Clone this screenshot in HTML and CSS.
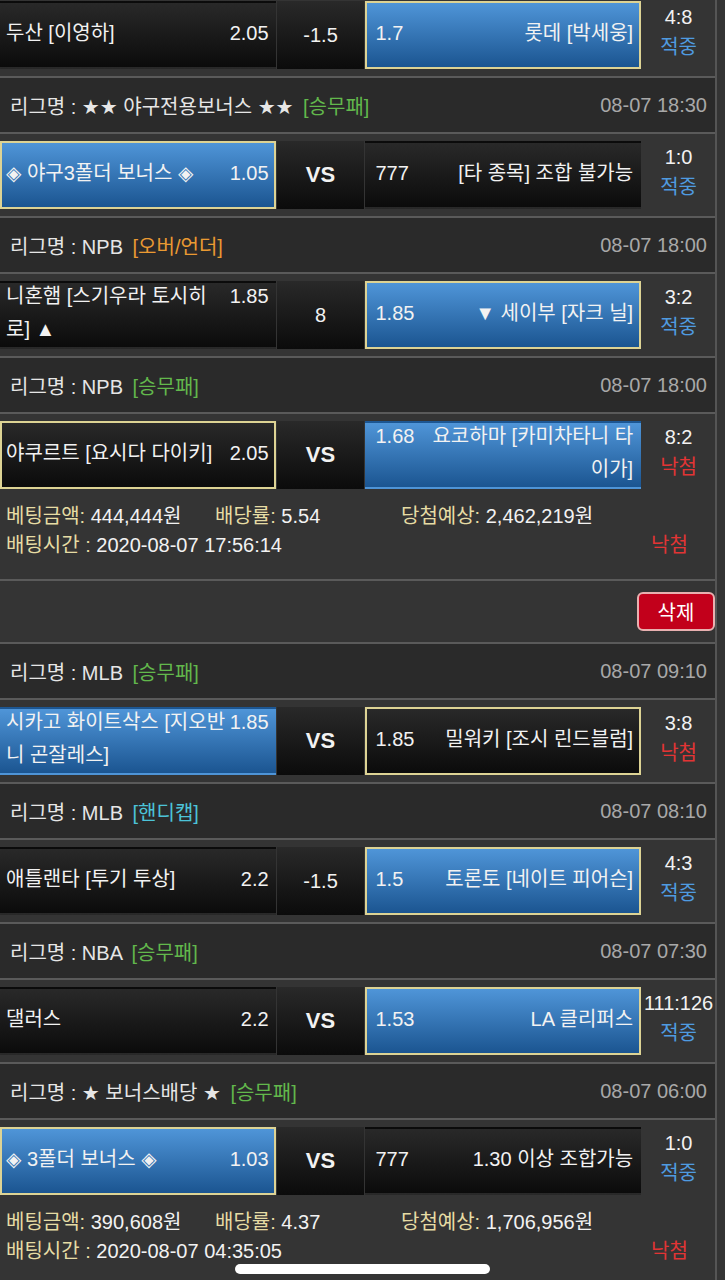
FILE: index.html
```html
<!DOCTYPE html>
<html lang="ko">
<head>
  <meta charset="UTF-8">
  <meta name="viewport" content="width=device-width, initial-scale=1.0">
  <title>배팅내역</title>
  <link rel="stylesheet" href="styles.css">
</head>
<body>
  <div class="bet-list">

    <div class="match first">
      <div class="team home"><div class="team-in"><span class="odds">2.05</span>두산 [이영하]</div></div>
      <div class="mid">-1.5</div>
      <div class="team away win picked"><div class="team-in"><span class="odds">1.7</span>롯데 [박세웅]</div></div>
      <div class="result"><div>4:8</div><div class="hit">적중</div></div>
    </div>

    <div class="league">
      <div>리그명 : ★★ 야구전용보너스 ★★ <span class="type green">[승무패]</span></div>
      <div class="time">08-07 18:30</div>
    </div>
    <div class="match">
      <div class="team home win picked"><div class="team-in"><span class="odds">1.05</span>◈ 야구3폴더 보너스 ◈</div></div>
      <div class="mid vs">VS</div>
      <div class="team away"><div class="team-in"><span class="odds">777</span>[타 종목] 조합 불가능</div></div>
      <div class="result"><div>1:0</div><div class="hit">적중</div></div>
    </div>

    <div class="league">
      <div>리그명 : NPB <span class="type orange">[오버/언더]</span></div>
      <div class="time">08-07 18:00</div>
    </div>
    <div class="match">
      <div class="team home"><div class="team-in"><span class="odds">1.85</span>니혼햄 [스기우라 토시히로] ▲</div></div>
      <div class="mid">8</div>
      <div class="team away win picked"><div class="team-in"><span class="odds">1.85</span>▼ 세이부 [자크 닐]</div></div>
      <div class="result"><div>3:2</div><div class="hit">적중</div></div>
    </div>

    <div class="league">
      <div>리그명 : NPB <span class="type green">[승무패]</span></div>
      <div class="time">08-07 18:00</div>
    </div>
    <div class="match">
      <div class="team home picked"><div class="team-in"><span class="odds">2.05</span>야쿠르트 [요시다 다이키]</div></div>
      <div class="mid vs">VS</div>
      <div class="team away win"><div class="team-in"><span class="odds">1.68</span>요코하마 [카미차타니 타이가]</div></div>
      <div class="result"><div>8:2</div><div class="miss">낙첨</div></div>
    </div>

    <div class="bet-info">
      <div class="info-row">
        <div><span class="label">베팅금액:</span> 444,444원</div>
        <div><span class="label">배당률:</span> 5.54</div>
        <div><span class="label">당첨예상:</span> 2,462,219원</div>
      </div>
      <div class="info-row last">
        <div><span class="label">배팅시간 :</span> 2020-08-07 17:56:14</div>
        <div class="miss">낙첨</div>
      </div>
    </div>
    <div class="actions">
      <button class="delete-btn">삭제</button>
    </div>

    <div class="league">
      <div>리그명 : MLB <span class="type green">[승무패]</span></div>
      <div class="time">08-07 09:10</div>
    </div>
    <div class="match">
      <div class="team home win"><div class="team-in"><span class="odds">1.85</span>시카고 화이트삭스 [지오반니 곤잘레스]</div></div>
      <div class="mid vs">VS</div>
      <div class="team away picked"><div class="team-in"><span class="odds">1.85</span>밀워키 [조시 린드블럼]</div></div>
      <div class="result"><div>3:8</div><div class="miss">낙첨</div></div>
    </div>

    <div class="league">
      <div>리그명 : MLB <span class="type cyan">[핸디캡]</span></div>
      <div class="time">08-07 08:10</div>
    </div>
    <div class="match">
      <div class="team home"><div class="team-in"><span class="odds">2.2</span>애틀랜타 [투기 투상]</div></div>
      <div class="mid">-1.5</div>
      <div class="team away win picked"><div class="team-in"><span class="odds">1.5</span>토론토 [네이트 피어슨]</div></div>
      <div class="result"><div>4:3</div><div class="hit">적중</div></div>
    </div>

    <div class="league">
      <div>리그명 : NBA <span class="type green">[승무패]</span></div>
      <div class="time">08-07 07:30</div>
    </div>
    <div class="match">
      <div class="team home"><div class="team-in"><span class="odds">2.2</span>댈러스</div></div>
      <div class="mid vs">VS</div>
      <div class="team away win picked"><div class="team-in"><span class="odds">1.53</span>LA 클리퍼스</div></div>
      <div class="result"><div>111:126</div><div class="hit">적중</div></div>
    </div>

    <div class="league">
      <div>리그명 : ★ 보너스배당 ★ <span class="type green">[승무패]</span></div>
      <div class="time">08-07 06:00</div>
    </div>
    <div class="match">
      <div class="team home win picked"><div class="team-in"><span class="odds">1.03</span>◈ 3폴더 보너스 ◈</div></div>
      <div class="mid vs">VS</div>
      <div class="team away"><div class="team-in"><span class="odds">777</span>1.30 이상 조합가능</div></div>
      <div class="result"><div>1:0</div><div class="hit">적중</div></div>
    </div>

    <div class="bet-info">
      <div class="info-row">
        <div><span class="label">베팅금액:</span> 390,608원</div>
        <div><span class="label">배당률:</span> 4.37</div>
        <div><span class="label">당첨예상:</span> 1,706,956원</div>
      </div>
      <div class="info-row last">
        <div><span class="label">배팅시간 :</span> 2020-08-07 04:35:05</div>
        <div class="miss">낙첨</div>
      </div>
    </div>

  </div>
  <div class="home-bar"></div>
</body>
</html>
```

FILE: styles.css
```css
body {
  margin: 0;
  background: #343434;
  color: #f2f2f2;
  font-family: "Liberation Sans", "DejaVu Sans", "Noto Sans CJK KR", sans-serif;
  font-size: 20px;
  overflow: hidden;
}
.bet-list {
  width: 715px;
  border-right: 2px solid #555;
}
.match {
  display: flex;
  gap: 1px;
  padding: 7px 0;
}
.match.first {
  margin-top: -6px;
}
.team {
  box-sizing: border-box;
  width: 276px;
  height: 68px;
  display: flex;
  align-items: center;
  border: 2px solid transparent;
  padding-bottom: 4px;
  background: linear-gradient(#292929, #0b0b0b);
  line-height: 33px;
}
.team.win {
  background: linear-gradient(#4f95d8, #1b5591);
}
.team.picked {
  border-color: #ddd394;
}
.team-in {
  display: flow-root;
  width: 100%;
}
.home {
  padding-left: 4px;
  padding-right: 5px;
}
.home .odds {
  float: right;
  padding-left: 4px;
}
.away {
  padding-left: 8px;
  padding-right: 6px;
  text-align: right;
}
.away .odds {
  float: left;
  padding-right: 4px;
}
.mid {
  width: 88px;
  height: 68px;
  display: flex;
  align-items: center;
  justify-content: center;
  background: linear-gradient(#292929, #0b0b0b);
}
.mid.vs {
  font-weight: bold;
  font-size: 22px;
}
.result {
  width: 73px;
  display: flex;
  flex-direction: column;
  justify-content: center;
  align-items: center;
  line-height: 30px;
  padding-bottom: 6px;
  box-sizing: border-box;
}
.hit {
  color: #4f9be0;
}
.miss {
  color: #e23434;
}
.league {
  height: 54px;
  display: flex;
  align-items: center;
  justify-content: space-between;
  padding: 0 8px 0 10px;
  background: #2a2a2a;
  border-top: 2px solid #5a5a5a;
  border-bottom: 2px solid #5a5a5a;
  color: #e6e6e6;
}
.league .type {
  margin-left: 4px;
}
.league .time {
  color: #a8a8a8;
}
.type.green {
  color: #62b84c;
}
.type.orange {
  color: #ea9a32;
}
.type.cyan {
  color: #4cc3d8;
}
.bet-info {
  padding: 6px 0 19px 6px;
  line-height: 29px;
}
.info-row {
  display: grid;
  grid-template-columns: 209px 186px 1fr;
}
.info-row.last {
  grid-template-columns: 1fr 64px;
}
.label {
  color: #e6dca4;
}
.actions {
  border-top: 2px solid #5a5a5a;
  padding: 11px 0;
  display: flex;
  justify-content: flex-end;
}
.delete-btn {
  width: 78px;
  height: 39px;
  background: #c2001b;
  color: #fff;
  border: 2px solid #e8b0b0;
  border-radius: 6px;
  font-family: inherit;
  font-size: 20px;
  padding: 0;
}
.home-bar {
  position: fixed;
  left: 50%;
  bottom: 6px;
  width: 255px;
  height: 10px;
  margin-left: -128px;
  background: #fff;
  border-radius: 5px;
}
```
